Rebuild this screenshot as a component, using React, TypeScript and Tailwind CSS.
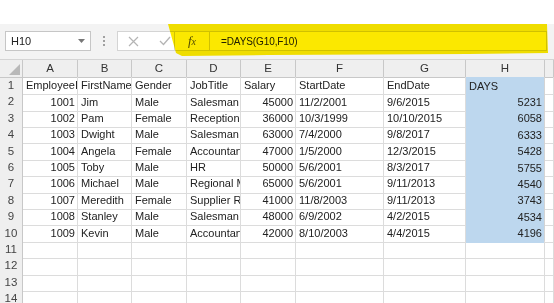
import React from 'react';

const cols = ['A', 'B', 'C', 'D', 'E', 'F', 'G', 'H', ''];

type Row = (string | number)[];

const data: Row[] = [
  ['EmployeeID', 'FirstName', 'Gender', 'JobTitle', 'Salary', 'StartDate', 'EndDate', 'DAYS'],
  [1001, 'Jim', 'Male', 'Salesman', 45000, '11/2/2001', '9/6/2015', 5231],
  [1002, 'Pam', 'Female', 'Receptionist', 36000, '10/3/1999', '10/10/2015', 6058],
  [1003, 'Dwight', 'Male', 'Salesman', 63000, '7/4/2000', '9/8/2017', 6333],
  [1004, 'Angela', 'Female', 'Accountant', 47000, '1/5/2000', '12/3/2015', 5428],
  [1005, 'Toby', 'Male', 'HR', 50000, '5/6/2001', '8/3/2017', 5755],
  [1006, 'Michael', 'Male', 'Regional Manager', 65000, '5/6/2001', '9/11/2013', 4540],
  [1007, 'Meredith', 'Female', 'Supplier Relations', 41000, '11/8/2003', '9/11/2013', 3743],
  [1008, 'Stanley', 'Male', 'Salesman', 48000, '6/9/2002', '4/2/2015', 4534],
  [1009, 'Kevin', 'Male', 'Accountant', 42000, '8/10/2003', '4/4/2015', 4196],
  [],
  [],
  [],
  [],
];

const gridCols = 'grid grid-cols-[23px_55px_54px_55px_54px_55px_88px_82px_79px_1fr]';

export default function App() {
  return (
    <div
      className="relative w-[554px] h-[303px] overflow-hidden bg-white text-[#222]"
      style={{ fontFamily: '"Liberation Sans", Arial, sans-serif' }}
    >
      {/* Top white strip */}
      <div className="h-[24px] bg-white" />

      {/* Formula bar */}
      <div className="h-[35px] bg-[#f3f3f3] flex items-start pt-[7px]">
        <div className="ml-[5px] w-[86px] h-[20px] bg-white border border-[#c6c6c6] flex items-center justify-between pl-[5px] pr-[5px]">
          <span className="text-[11px]">H10</span>
          <svg width="7" height="4" viewBox="0 0 7 4">
            <path d="M0 0 L7 0 L3.5 4 Z" fill="#777" />
          </svg>
        </div>
        <div className="w-[26px] h-[20px] flex flex-col items-center justify-center gap-[2px]">
          <div className="w-[2px] h-[2px] bg-[#a0a0a0]" />
          <div className="w-[2px] h-[2px] bg-[#a0a0a0]" />
          <div className="w-[2px] h-[2px] bg-[#a0a0a0]" />
        </div>
        <div className="w-[58px] h-[20px] bg-white border border-[#d4d4d4] flex items-center">
          <svg className="ml-[10px]" width="11" height="11" viewBox="0 0 11 11">
            <path d="M1 1 L10 10 M10 1 L1 10" stroke="#b4b4b4" strokeWidth="1.2" fill="none" />
          </svg>
          <svg className="ml-[20px]" width="12" height="10" viewBox="0 0 12 10">
            <path d="M1 5 L4.5 8.5 L11 1" stroke="#b4b4b4" strokeWidth="1.3" fill="none" />
          </svg>
        </div>
        <div className="w-[35px] h-[20px] bg-white border-y border-r border-[#d4d4d4] flex items-center justify-center">
          <span
            className="italic text-[13px] text-[#555]"
            style={{ fontFamily: '"Liberation Serif", "Times New Roman", serif' }}
          >
            f<span className="text-[10px]">x</span>
          </span>
        </div>
        <div className="w-[337px] h-[20px] bg-white border-y border-r border-[#d4d4d4] flex items-center pl-[11px]">
          <span className="text-[10px] tracking-[-0.1px]">=DAYS(G10,F10)</span>
        </div>
      </div>

      {/* Highlighter mark */}
      <div
        className="absolute left-[168px] top-[24px] w-[380px] h-[33px] bg-[#fbe800] mix-blend-multiply"
        style={{ clipPath: 'polygon(0 0, 379px 0, 380px 29px, 300px 30px, 100px 31px, 14px 32px, 8px 29px)' }}
      />

      {/* Column headers */}
      <div className={`${gridCols} h-[18px] bg-[#efefef] border-t border-[#d4d4d4]`}>
        <div className="relative border-r border-b border-[#c8c8c8]">
          <svg className="absolute right-[2px] bottom-[2px]" width="11" height="11" viewBox="0 0 11 11">
            <path d="M11 0 L11 11 L0 11 Z" fill="#b9b9b9" />
          </svg>
        </div>
        {cols.map((c, i) => (
          <div
            key={i}
            className="border-r border-b border-[#c8c8c8] flex items-center justify-center text-[11.5px] text-[#333]"
          >
            {c}
          </div>
        ))}
      </div>

      {/* Rows */}
      {data.map((row, r) => (
        <div key={r} className={`${gridCols} h-[16.4px]`}>
          <div className="bg-[#efefef] border-r border-b border-[#c8c8c8] flex items-center justify-center text-[11.5px] text-[#444]">
            {r + 1}
          </div>
          {cols.map((_, c) => {
            const v = row[c];
            const isNum = typeof v === 'number';
            const selected = c === 7 && r < 10;
            return (
              <div
                key={c}
                className={`overflow-hidden whitespace-nowrap flex items-center text-[11px] leading-none ${
                  isNum ? 'justify-end pr-[2px]' : 'pl-[3px]'
                } ${
                  selected
                    ? 'bg-[#bdd7ee] border-r border-[#d4d4d4]'
                    : 'border-r border-b border-[#dcdcdc]'
                }`}
              >
                {v ?? ''}
              </div>
            );
          })}
        </div>
      ))}
    </div>
  );
}
